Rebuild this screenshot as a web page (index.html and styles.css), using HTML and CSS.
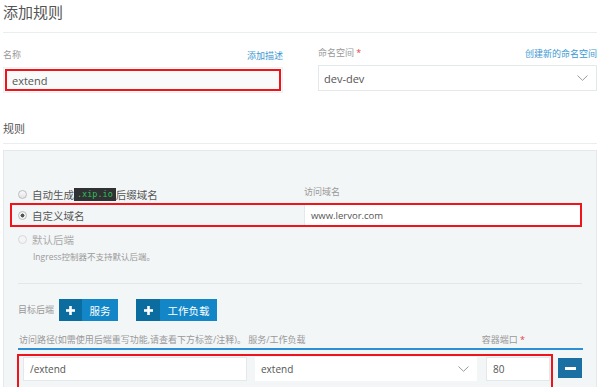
FILE: index.html
```html
<!DOCTYPE html>
<html lang="zh">
<head>
    <meta charset="UTF-8">
    <title>添加规则</title>
    <link rel="stylesheet" href="styles.css">
</head>
<body>
    <h1 class="title">添加规则</h1>

    <div class="top-row">
        <div class="field">
            <div class="field-head">
                <span class="label">名称</span>
                <a class="link">添加描述</a>
            </div>
            <div class="input input-name marked">extend</div>
        </div>
        <div class="field field-ns">
            <div class="field-head">
                <span class="label">命名空间 <span class="req">*</span></span>
                <a class="link">创建新的命名空间</a>
            </div>
            <div class="input select">
                <span>dev-dev</span>
                <svg class="chev" width="11" height="6" viewBox="0 0 11 6"><polyline points="0.5,0.5 5.5,5.3 10.5,0.5" fill="none" stroke="#9a9a9a" stroke-width="1"/></svg>
            </div>
        </div>
    </div>

    <h2 class="section">规则</h2>

    <div class="panel">
        <div class="host-grid">
            <div class="radio-line">
                <span class="radio"></span>
                <span>自动生成</span><code class="badge">.xip.io</code><span>后缀域名</span>
            </div>
            <div class="label host-label">访问域名</div>

            <div class="host-row">
                <div class="radio-line">
                    <span class="radio checked"></span>
                    <span>自定义域名</span>
                </div>
                <div class="input input-host">www.lervor.com</div>
            </div>

            <div class="radio-line disabled">
                <span class="radio"></span>
                <span>默认后端</span>
            </div>
            <div></div>
            <div class="note">Ingress控制器不支持默认后端。</div>
        </div>

        <div class="target-row">
            <span class="label">目标后端</span>
            <button class="add-btn"><span class="plus"><svg width="9" height="9" viewBox="0 0 9 9"><rect x="3.2" y="0" width="2.6" height="9" fill="#fff"/><rect x="0" y="3.2" width="9" height="2.6" fill="#fff"/></svg></span><span class="add-text">服务</span></button>
            <button class="add-btn add-wide"><span class="plus"><svg width="9" height="9" viewBox="0 0 9 9"><rect x="3.2" y="0" width="2.6" height="9" fill="#fff"/><rect x="0" y="3.2" width="9" height="2.6" fill="#fff"/></svg></span><span class="add-text">工作负载</span></button>
        </div>

        <div class="path-head">
            <span class="label">访问路径(如需使用后端重写功能,请查看下方标签/注释)。 服务/工作负载</span>
            <span class="label">容器端口 <span class="req">*</span></span>
        </div>

        <div class="path-row">
            <div class="path-group">
                <div class="input input-path">/extend</div>
                <div class="input input-svc">
                    <span>extend</span>
                    <svg class="chev" width="11" height="6" viewBox="0 0 11 6"><polyline points="0.5,0.5 5.5,5.3 10.5,0.5" fill="none" stroke="#9a9a9a" stroke-width="1"/></svg>
                </div>
                <div class="input input-port">80</div>
            </div>
            <button class="remove-btn"><span class="minus"></span></button>
        </div>
    </div>
</body>
</html>
```

FILE: styles.css
```css
body {
    margin: 0;
    padding: 0 3px;
    overflow: hidden;
    font-family: "Open Sans", "Noto Sans CJK SC", sans-serif;
    color: #555;
    background: #fff;
}
.title {
    margin: 0;
    padding-bottom: 8px;
    font-size: 15px;
    font-weight: normal;
    line-height: 24px;
    color: #555;
    border-bottom: 1px solid #e8edef;
}
.top-row {
    display: grid;
    grid-template-columns: 280px 279px;
    column-gap: 35px;
    margin-top: 15px;
}
.field-head {
    display: flex;
    justify-content: space-between;
    align-items: center;
    height: 14px;
    margin-bottom: 5px;
}
.field-ns {
    margin-top: -2px;
}
.label {
    font-size: 9px;
    color: #999;
    line-height: 14px;
}
.req {
    color: #e9403b;
}
.link {
    font-size: 9px;
    color: #3a97d2;
}
.input {
    box-sizing: border-box;
    display: flex;
    align-items: center;
    background: #fff;
    border: 1px solid #e3e8ea;
    color: #555;
}
.input-name {
    height: 26px;
    padding-left: 8px;
    font-size: 11px;
    background: #f9fafa;
    border-color: #eef1f2;
}
.marked {
    outline: 2px solid #f0141a;
    outline-offset: -4px;
}
.select {
    height: 26px;
    padding: 0 8px 0 5px;
    font-size: 11px;
    justify-content: space-between;
}
.section {
    margin: 28px 0 0;
    padding-bottom: 6px;
    font-size: 11px;
    font-weight: normal;
    line-height: 16px;
    color: #555;
    border-bottom: 1px solid #e8edef;
}
.panel {
    margin-top: 6px;
    height: 260px;
    padding: 34px 13px 0 14px;
    background: #f3f6f7;
    border: 1px solid #e4e9eb;
}
.host-grid {
    display: grid;
    grid-template-columns: 286px 278px;
}
.radio-line {
    display: flex;
    align-items: center;
    height: 18px;
    font-size: 10.5px;
    color: #555;
}
.radio-line.disabled {
    height: 24px;
    color: #aaa;
}
.radio {
    box-sizing: border-box;
    width: 9px;
    height: 9px;
    margin-right: 5px;
    border-radius: 50%;
    border: 1px solid #bcbcbc;
    background: linear-gradient(#fafafa, #e4e4e4);
}
.radio.checked {
    background: radial-gradient(circle, #555 0, #555 1.8px, #f2f2f2 2.2px);
}
.disabled .radio {
    border-color: #d8d8d8;
    background: #f4f4f4;
}
.badge {
    display: inline-block;
    height: 13px;
    padding: 0 3px;
    line-height: 13px;
    font-family: "DejaVu Sans Mono", monospace;
    font-size: 8.5px;
    color: #2fbf5a;
    background: #2f3133;
}
.host-row {
    grid-column: 1 / 3;
    display: grid;
    grid-template-columns: 286px 278px;
    margin-left: -8px;
    padding-left: 8px;
    height: 24px;
    outline: 2px solid #f0141a;
    outline-offset: -2px;
}
.host-row .radio-line {
    height: 24px;
}
.input-host {
    height: 24px;
    padding-left: 6px;
    font-size: 9.5px;
    border-right: none;
}
.note {
    grid-column: 1 / 3;
    height: 12px;
    line-height: 12px;
    padding-left: 15px;
    font-size: 8.5px;
    color: #999;
    padding-bottom: 20px;
    border-bottom: 1px solid #e2e7e9;
}
.target-row {
    display: flex;
    align-items: center;
    margin-top: 15px;
    height: 22px;
}
.target-row .label {
    margin-right: 5px;
}
.add-btn {
    display: flex;
    height: 22px;
    padding: 0;
    border: none;
    background: #1386c7;
    color: #fff;
    font-family: inherit;
    font-size: 10.5px;
    margin-right: 18px;
}
.plus {
    display: flex;
    align-items: center;
    justify-content: center;
    width: 23px;
    height: 22px;
    background: #0b6c9f;
}
.add-wide .plus {
    width: 24px;
}
.add-text {
    display: flex;
    align-items: center;
    justify-content: center;
    width: 36px;
}
.add-wide .add-text {
    width: 57px;
}
.path-head {
    display: flex;
    justify-content: space-between;
    margin-top: 12px;
    padding: 0 58px 1px 1px;
    border-bottom: 2px solid #2d8fd5;
}
.path-row {
    display: flex;
    align-items: flex-start;
    margin-top: 4px;
}
.path-group {
    display: flex;
    gap: 8px;
    margin-left: -1px;
    padding: 1px 1px 6px 4px;
    border: 2px solid #f0141a;
}
.input-path, .input-svc, .input-port {
    height: 24px;
    font-size: 10px;
}
.input-path {
    width: 224px;
    padding-left: 6px;
}
.input-svc {
    width: 222px;
    padding: 0 7px 0 5px;
    justify-content: space-between;
    border-color: #fff;
}
.input-port {
    width: 64px;
    margin-left: 1px;
    padding-left: 6px;
}
.remove-btn {
    display: flex;
    align-items: center;
    justify-content: center;
    width: 24px;
    height: 20px;
    margin: 4px 0 0 5px;
    padding: 0;
    border: none;
    background: #1a6fa3;
}
.minus {
    width: 11px;
    height: 3px;
    background: #fff;
}
```
